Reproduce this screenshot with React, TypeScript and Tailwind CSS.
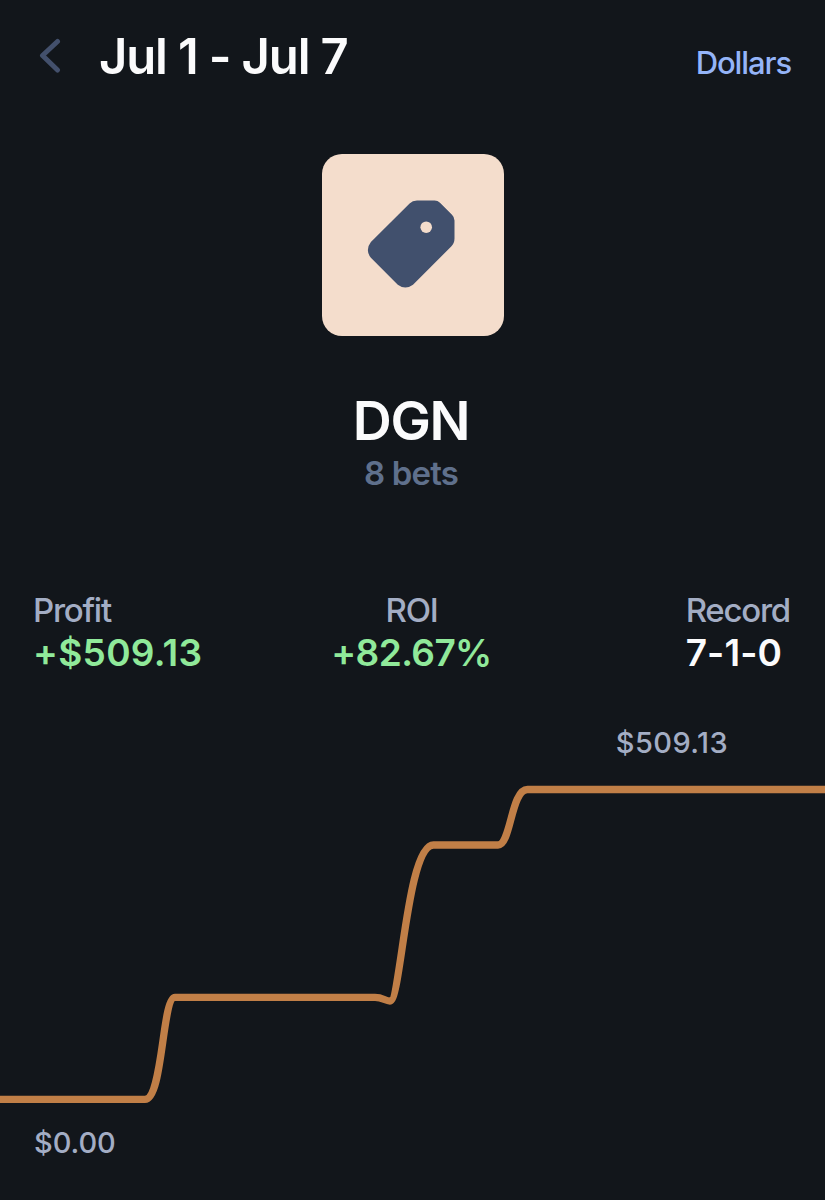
type Stat = {
  label: string;
  value: string;
  align: string;
  valueClass: string;
};

const stats: Stat[] = [
  { label: 'Profit', value: '+$509.13', align: 'items-start', valueClass: 'text-[#90e99a] tracking-[0.3px]' },
  { label: 'ROI', value: '+82.67%', align: 'items-center', valueClass: 'text-[#90e99a] tracking-[-0.6px]' },
  { label: 'Record', value: '7-1-0', align: 'items-start justify-self-end', valueClass: 'text-[#fbfbfc] tracking-[0.1px]' }
];

function Header() {
  return (
    <header className="flex items-baseline pl-[38px] pr-[34px] pt-[27px]">
      <button type="button" aria-label="Back" className="h-[36px] w-[24px] self-start mt-[11px]">
        <svg width="24" height="36" viewBox="0 0 24 36" fill="none">
          <path d="M19.5 3.5L4.5 17.5L19.5 32" stroke="#43506c" strokeWidth="5" strokeLinecap="round" strokeLinejoin="round" />
        </svg>
      </button>
      <h1 className="ml-[37px] text-[49px] leading-[60px] font-semibold tracking-[-1.15px] text-[#fbfbfc]">Jul 1 - Jul 7</h1>
      <button type="button" className="ml-auto text-[31px] leading-[38px] font-[450] tracking-[-1.1px] text-[#94b4f8]">
        Dollars
      </button>
    </header>
  );
}

function TagCard() {
  return (
    <div className="h-[182px] w-[182px] overflow-hidden rounded-[20px] bg-[#f4ddcc]">
      <svg width="182" height="182" viewBox="0 0 182 182">
        <path
          d="M95 46.5H112.5Q115.7 46.5 118 48.8L130 60.8Q132.5 63.3 132.5 66.5V84.5Q132.5 89.2 129.2 92.5L91 130.7Q83.3 136.4 75.8 130.7L48.9 103.8Q42.8 96 48.9 88.1L87.6 49.4Q90.5 46.5 95 46.5Z"
          fill="#41506d"
        />
        <circle cx="104.2" cy="73.2" r="5.8" fill="#f4ddcc" />
      </svg>
    </div>
  );
}

function ProfitChart() {
  return (
    <svg className="block" width="825" height="350" viewBox="0 770 825 350" fill="none">
      <path
        d="M-5 1099.4H145C163 1099.4 162 997.4 175 997.4H375C383 997.4 385 1001 390 1001C401 1001 407 845 433.5 845H498C511 845 511 789.5 527.5 789.5H830"
        stroke="#c17f47"
        strokeWidth="7.3"
      />
    </svg>
  );
}

export default function App() {
  return (
    <main className="flex h-[1200px] w-[825px] flex-col overflow-hidden bg-[#12161b] font-['Inter',sans-serif]">
      <Header />

      <section className="mt-[67px] flex flex-col items-center">
        <TagCard />
        <h2 className="mt-[55px] mr-[3px] text-[54px] leading-[60px] font-[560] tracking-[-1.3px] text-[#fbfbfc]">DGN</h2>
        <p className="mt-[2px] mr-[3px] text-[33px] leading-[40px] font-[560] tracking-[-0.8px] text-[#5f708c]">8 bets</p>
      </section>

      <section className="mt-[97px] grid grid-cols-3 pl-[33px] pr-[35px]">
        {stats.map((stat) => (
          <div key={stat.label} className={`flex flex-col ${stat.align}`}>
            <span className="text-[33px] leading-[40px] font-[450] tracking-[-1.25px] text-[#a3adc4]">{stat.label}</span>
            <span className={`mt-px text-[37px] leading-[44px] font-[560] ${stat.valueClass}`}>{stat.value}</span>
          </div>
        ))}
      </section>

      <section className="mt-[50px] flex flex-col">
        <span className="mr-[97px] self-end text-[29px] leading-[36px] font-medium tracking-[0.4px] text-[#a3adc4]">$509.13</span>
        <div className="mt-[9px]">
          <ProfitChart />
        </div>
        <span className="mt-[5px] ml-[34px] text-[29px] leading-[36px] font-medium tracking-[-0.1px] text-[#a3adc4]">$0.00</span>
      </section>
    </main>
  );
}
